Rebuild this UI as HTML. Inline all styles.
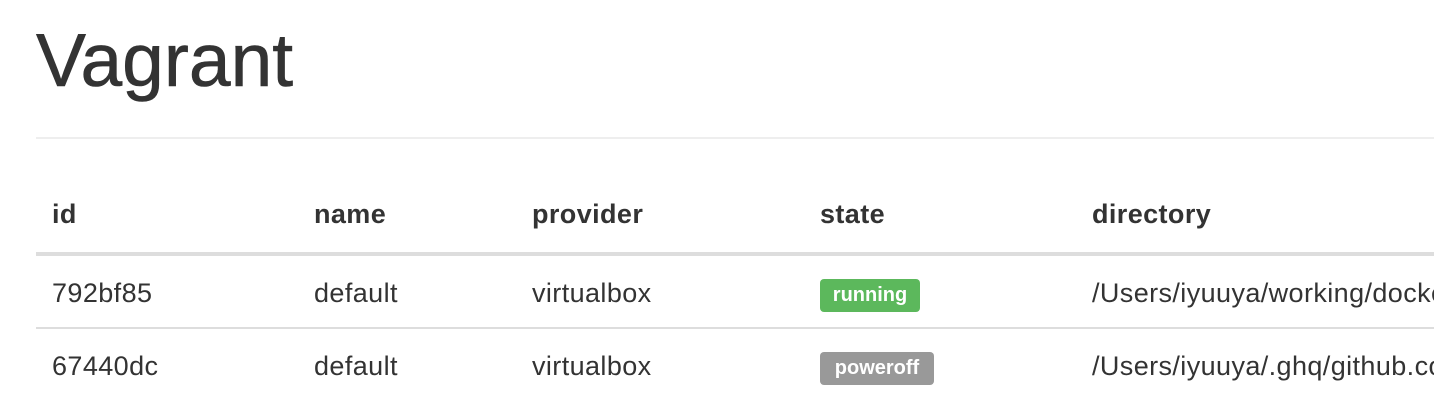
<!DOCTYPE html>
<html><head><style>
body{margin:0;width:1434px;height:410px;overflow:hidden;background:#fff;font-family:"Liberation Sans",Arial,sans-serif;color:#333;position:relative}
.a{position:absolute;white-space:nowrap;letter-spacing:0.4px}
h1{position:absolute;left:36px;top:20px;margin:0;font-size:75px;font-weight:normal;line-height:80px;-webkit-text-stroke:0.6px #333}
.hr{position:absolute;left:36px;right:0;height:2px;background:#eee;top:137px}
.th{font-weight:bold;font-size:27px;top:199px}
.td{font-size:27px}
.l1{position:absolute;left:36px;right:0;height:4px;background:#ddd;top:252px}
.l2{position:absolute;left:36px;right:0;height:2px;background:#ddd;top:327px}
.lab{position:absolute;color:#fff;font-weight:bold;font-size:20px;border-radius:4px;text-align:center;line-height:33px;height:33px}
</style></head><body>
<h1>Vagrant</h1>
<div class="hr"></div>
<div class="a th" style="left:52px">id</div>
<div class="a th" style="left:314px">name</div>
<div class="a th" style="left:532px">provider</div>
<div class="a th" style="left:820px">state</div>
<div class="a th" style="left:1092px">directory</div>
<div class="l1"></div>
<div class="a td" style="left:52px;top:278px">792bf85</div>
<div class="a td" style="left:314px;top:278px">default</div>
<div class="a td" style="left:532px;top:278px">virtualbox</div>
<div class="lab" style="left:820px;top:279px;width:100px;background:#5cb85c">running</div>
<div class="a td" style="left:1092px;top:278px">/Users/iyuuya/working/docker</div>
<div class="l2"></div>
<div class="a td" style="left:52px;top:351px">67440dc</div>
<div class="a td" style="left:314px;top:351px">default</div>
<div class="a td" style="left:532px;top:351px">virtualbox</div>
<div class="lab" style="left:820px;top:352px;width:114px;background:#999">poweroff</div>
<div class="a td" style="left:1092px;top:351px">/Users/iyuuya/.ghq/github.com</div>
</body></html>
